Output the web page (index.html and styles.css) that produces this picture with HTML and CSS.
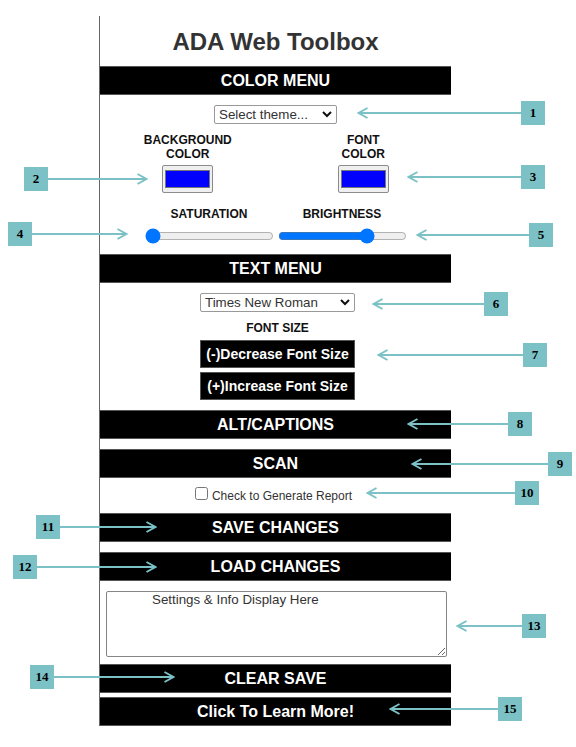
FILE: index.html
```html
<!DOCTYPE html>
<html lang="en">
<head>
<meta charset="utf-8">
<title>ADA Web Toolbox</title>
<link rel="stylesheet" href="styles.css">
</head>
<body>
<svg class="defs" aria-hidden="true">
  <symbol id="head" viewBox="0 0 12 12"><path d="M10.5 1 1.5 6l9 5" fill="none" stroke="currentColor" stroke-width="2"/></symbol>
</svg>
<main class="guide">
  <form class="toolbox">
    <h1 class="title">ADA Web Toolbox</h1>

    <button class="bar" type="button">COLOR MENU</button>
    <section class="menu">
      <select class="theme" aria-label="Theme"><option>Select theme...</option></select>
      <div class="colors">
        <label class="field">BACKGROUND<br>COLOR<input class="swatch" type="color" value="#0000ff"></label>
        <label class="field">FONT<br>COLOR<input class="swatch" type="color" value="#0000ff"></label>
      </div>
      <div class="sliders">
        <label class="field">SATURATION<input class="slider" type="range" min="0" max="100" value="0"></label>
        <label class="field">BRIGHTNESS<input class="slider" type="range" min="0" max="100" value="72"></label>
      </div>
    </section>

    <button class="bar" type="button">TEXT MENU</button>
    <section class="menu text-menu">
      <select class="family" aria-label="Font family"><option>Times New Roman</option></select>
      <h2 class="caption">FONT SIZE</h2>
      <div class="sizes">
        <button class="size" type="button">(-)Decrease Font Size</button>
        <button class="size" type="button">(+)Increase Font Size</button>
      </div>
    </section>

    <button class="bar spaced" type="button">ALT/CAPTIONS</button>
    <button class="bar" type="button">SCAN</button>
    <label class="report"><input class="check" type="checkbox"><span>Check to Generate Report</span></label>
    <button class="bar spaced" type="button">SAVE CHANGES</button>
    <button class="bar spaced" type="button">LOAD CHANGES</button>
    <textarea class="info" aria-label="Settings and info">Settings &amp; Info Display Here</textarea>
    <button class="bar tight" type="button">CLEAR SAVE</button>
    <button class="bar" type="button">Click To Learn More!</button>
  </form>

  <div class="note right n1"><b class="num">1</b><i class="line"></i><svg class="tip"><use href="#head"/></svg></div>
  <div class="note left n2"><b class="num">2</b><i class="line"></i><svg class="tip"><use href="#head"/></svg></div>
  <div class="note right n3"><b class="num">3</b><i class="line"></i><svg class="tip"><use href="#head"/></svg></div>
  <div class="note left n4"><b class="num">4</b><i class="line"></i><svg class="tip"><use href="#head"/></svg></div>
  <div class="note right n5"><b class="num">5</b><i class="line"></i><svg class="tip"><use href="#head"/></svg></div>
  <div class="note right n6"><b class="num">6</b><i class="line"></i><svg class="tip"><use href="#head"/></svg></div>
  <div class="note right n7"><b class="num">7</b><i class="line"></i><svg class="tip"><use href="#head"/></svg></div>
  <div class="note right n8"><b class="num">8</b><i class="line"></i><svg class="tip"><use href="#head"/></svg></div>
  <div class="note right n9"><b class="num">9</b><i class="line"></i><svg class="tip"><use href="#head"/></svg></div>
  <div class="note right n10"><b class="num">10</b><i class="line"></i><svg class="tip"><use href="#head"/></svg></div>
  <div class="note left n11"><b class="num">11</b><i class="line"></i><svg class="tip"><use href="#head"/></svg></div>
  <div class="note left n12"><b class="num">12</b><i class="line"></i><svg class="tip"><use href="#head"/></svg></div>
  <div class="note right n13"><b class="num">13</b><i class="line"></i><svg class="tip"><use href="#head"/></svg></div>
  <div class="note left n14"><b class="num">14</b><i class="line"></i><svg class="tip"><use href="#head"/></svg></div>
  <div class="note right n15"><b class="num">15</b><i class="line"></i><svg class="tip"><use href="#head"/></svg></div>
</main>
</body>
</html>
```
FILE: styles.css
```css
* { box-sizing: border-box; }
body {
  margin: 0;
  background: #fff;
  color: #111;
  font-family: "Liberation Sans", Arial, sans-serif;
}
.defs { position: absolute; width: 0; height: 0; }
.guide { position: relative; padding: 16px 125px 22px 99px; }

.toolbox {
  display: flex;
  flex-direction: column;
  border-left: 1px solid #666;
}
.title {
  margin: 0;
  padding: 12px 0 10px;
  color: #333;
  font-size: 24px;
  line-height: 28px;
  text-align: center;
}
button, select, textarea { font-family: inherit; }
.bar {
  height: 29px;
  margin: 0;
  padding: 0;
  border: 1px solid #555;
  border-width: 1px 0;
  background: #000;
  color: #fff;
  font-size: 16px;
  font-weight: bold;
}
.bar.spaced { margin-bottom: 10px; }
.bar.tight { margin-bottom: 4px; }

.menu {
  display: flex;
  flex-direction: column;
  align-items: center;
  padding: 10px 0;
}
.text-menu { padding-left: 4px; }
select {
  appearance: none;
  height: 19px;
  padding: 0 4px;
  border: 1px solid #999;
  border-radius: 2px;
  background: #fff url("data:image/svg+xml,%3Csvg xmlns='http://www.w3.org/2000/svg' width='10' height='7'%3E%3Cpath d='M1 1l4 4 4-4' fill='none' stroke='%23111' stroke-width='2'/%3E%3C/svg%3E") no-repeat right 4px center;
  color: #333;
}
.theme { width: 123px; }
.family { width: 155px; }

.colors {
  display: grid;
  grid-template-columns: 1fr 1fr;
  width: 100%;
  margin-top: 9px;
}
.field {
  display: flex;
  flex-direction: column;
  align-items: center;
  font-size: 12px;
  font-weight: bold;
  line-height: 14px;
  text-align: center;
}
.swatch {
  appearance: none;
  width: 51px;
  height: 28px;
  margin: 4px 0 0;
  padding: 4px 2px;
  border: 1px solid #8c8c8c;
  border-radius: 2px;
  background: #efefef;
}
.swatch::-webkit-color-swatch-wrapper { padding: 0; }
.swatch::-webkit-color-swatch { border: 1px solid #777; }
.sliders { display: flex; gap: 4px; margin-top: 14px; }
.slider { width: 129px; height: 16px; margin: 7px 0 0; }

.caption { margin: 9px 0 5px; font-size: 12px; line-height: 14px; }
.sizes { display: flex; flex-direction: column; gap: 4px; }
.size {
  width: 155px;
  height: 28px;
  padding: 0;
  border: 1px solid #555;
  background: #000;
  color: #fff;
  font-size: 14px;
  font-weight: bold;
}

.report {
  display: flex;
  justify-content: center;
  gap: 4px;
  padding: 9px 4px 8px 0;
  color: #333;
  font-size: 12px;
  line-height: 18px;
}
.check { width: 13px; height: 13px; margin: 0; }
.info {
  height: 66px;
  margin: 0 4px 7px 6px;
  padding: 0 45px;
  border: 1px solid #858585;
  border-radius: 2px;
  color: #333;
}

/* Numbered callouts lying over the toolbox and its margins */
.note {
  position: absolute;
  display: flex;
  align-items: center;
  color: #7bc1c6;
  pointer-events: none;
}
.right { flex-direction: row-reverse; }
.left .tip { transform: scaleX(-1); }
.num {
  width: 24px;
  background: #7bc1c6;
  color: #000;
  font: bold 13px/24px "Liberation Serif", "Times New Roman", serif;
  text-align: center;
}
.line { flex: 1; height: 2px; background: currentColor; }
.tip { width: 12px; height: 12px; margin-left: -10px; }
.right .tip { margin: 0 -10px 0 0; }

.n1 { top: 101px; right: 31px; width: 188px; }
.n2 { top: 167px; left: 24px; width: 124px; }
.n3 { top: 165px; right: 31px; width: 138px; }
.n4 { top: 222px; left: 8px; width: 120px; }
.n5 { top: 223px; right: 23px; width: 137px; }
.n6 { top: 292px; right: 68px; width: 136px; }
.n7 { top: 343px; right: 29px; width: 170px; }
.n8 { top: 412px; right: 44px; width: 125px; }
.n9 { top: 452px; right: 4px; width: 161px; }
.n10 { top: 481px; right: 37px; width: 173px; }
.n11 { top: 515px; left: 36px; width: 121px; }
.n12 { top: 555px; left: 13px; width: 144px; }
.n13 { top: 614px; right: 30px; width: 90px; }
.n14 { top: 665px; left: 30px; width: 145px; }
.n15 { top: 697px; right: 54px; width: 133px; }
```
